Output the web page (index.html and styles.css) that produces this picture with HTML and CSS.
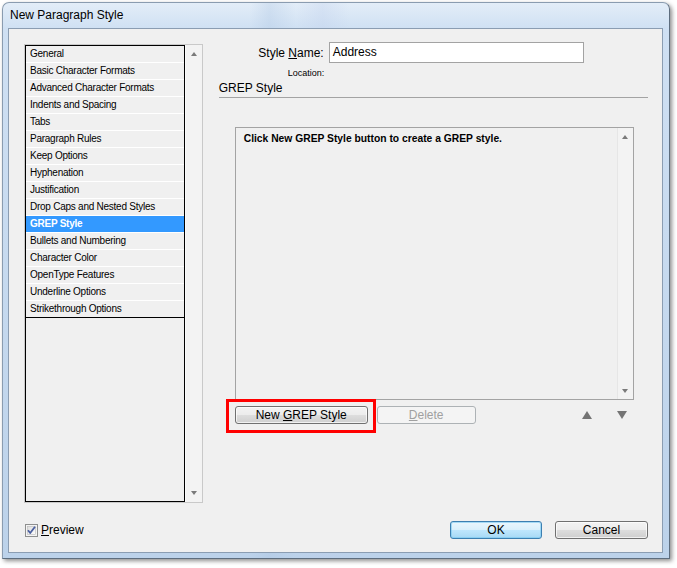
FILE: index.html
```html
<!DOCTYPE html>
<html>
<head>
<meta charset="utf-8">
<title>New Paragraph Style</title>
<link rel="stylesheet" href="styles.css">
</head>
<body>
<div class="screen">
  <div class="window">
    <div class="titlebar">New Paragraph Style</div>
    <div class="client">
      <div class="main">
        <div class="listbox">
          <div class="list">
            <div class="item">General</div>
            <div class="item">Basic Character Formats</div>
            <div class="item">Advanced Character Formats</div>
            <div class="item">Indents and Spacing</div>
            <div class="item">Tabs</div>
            <div class="item">Paragraph Rules</div>
            <div class="item">Keep Options</div>
            <div class="item">Hyphenation</div>
            <div class="item">Justification</div>
            <div class="item">Drop Caps and Nested Styles</div>
            <div class="item selected">GREP Style</div>
            <div class="item">Bullets and Numbering</div>
            <div class="item">Character Color</div>
            <div class="item">OpenType Features</div>
            <div class="item">Underline Options</div>
            <div class="item last">Strikethrough Options</div>
          </div>
          <div class="vscroll">
            <span class="sarrow up"></span>
            <span class="sarrow down"></span>
          </div>
        </div>
        <div class="panel">
          <div class="name-row">
            <label class="name-label">Style <u>N</u>ame:</label>
            <div class="textbox">Address</div>
          </div>
          <div class="location">Location:</div>
          <div class="heading">GREP Style</div>
          <div class="grepbox">
            <div class="grep-content">Click New GREP Style button to create a GREP style.</div>
            <div class="vscroll small">
              <span class="sarrow up"></span>
              <span class="sarrow down"></span>
            </div>
          </div>
          <div class="btn-row">
            <span class="highlight"><button class="btn new-btn">New <u>G</u>REP Style</button></span>
            <button class="btn disabled delete-btn"><u>D</u>elete</button>
            <span class="tri tri-up"></span>
            <span class="tri tri-down"></span>
          </div>
        </div>
      </div>
      <div class="bottom-row">
        <span class="checkbox">
          <svg width="13" height="13" viewBox="0 0 13 13">
            <defs>
              <linearGradient id="cbg" x1="0" y1="0" x2="1" y2="1">
                <stop offset="0" stop-color="#dcdcdc"/>
                <stop offset="1" stop-color="#ffffff"/>
              </linearGradient>
            </defs>
            <rect x="0.5" y="0.5" width="12" height="12" fill="#f4f4f4" stroke="#8e8f8f"/>
            <rect x="2.5" y="2.5" width="8" height="8" fill="url(#cbg)" stroke="#b9b9b9" stroke-width="0.6"/>
            <path d="M3 6.2 L5.2 9 L10 2.8" fill="none" stroke="#4a5fa0" stroke-width="1.8" stroke-linejoin="round"/>
          </svg>
        </span>
        <span class="check-label"><u>P</u>review</span>
        <div class="dlg-buttons">
          <button class="btn default ok-btn">OK</button>
          <button class="btn cancel-btn">Cancel</button>
        </div>
      </div>
    </div>
  </div>
</div>
</body>
</html>
```
FILE: styles.css
```css
* { box-sizing: border-box; }
html, body { margin: 0; padding: 0; }
body { background: #ffffff; font-family: "Liberation Sans", Arial, sans-serif; }

.screen {
  width: 677px;
  height: 568px;
  overflow: hidden;
  padding: 2px 0 0 2px;
}

.window {
  width: 668px;
  height: 557px;
  border: 1px solid #8a9cb0;
  border-right-color: #5d6d7e;
  border-bottom-color: #5d6d7e;
  border-radius: 7px 7px 0 0;
  background:
    linear-gradient(to right, rgba(255,255,255,0) 0, rgba(255,255,255,0) 37%, rgba(170,195,225,0.3) 40%, rgba(255,255,255,0) 44%, rgba(190,205,235,0.3) 48%, rgba(255,255,255,0) 52%, rgba(255,255,255,0) 100%),
    linear-gradient(to bottom, #e3edf8 0, #cfe0f3 26px, #c4d8ee 60%, #bcd2ea 100%);
  padding: 0 6px 5px 5px;
  display: flex;
  flex-direction: column;
  box-shadow: 2px 2px 4px rgba(0,0,0,0.45);
}

.titlebar {
  height: 25px;
  line-height: 25px;
  padding-left: 2px;
  font-size: 12px;
  color: #000;
}

.client {
  flex: 1;
  border: 1px solid #8b9db2;
  background: #f0f0f0;
  padding: 15px 14px 0 15px;
  display: flex;
  flex-direction: column;
}

.main {
  display: flex;
  height: 459px;
}

/* left list */
.listbox {
  width: 179px;
  height: 459px;
  border: 1px solid #c9c9c9;
  display: flex;
  background: #f0f0f0;
}
.list {
  width: 160px;
  border: 1px solid #000;
  background: #f0f0f0;
}
.item {
  height: 17px;
  line-height: 16px;
  padding-left: 4px;
  font-size: 10px;
  letter-spacing: -0.25px;
  color: #000;
  border-bottom: 1px solid #ffffff;
  white-space: nowrap;
}
.item.selected {
  background: #3399ff;
  color: #fff;
  font-weight: bold;
}
.item.last { border-bottom-color: #000; }

.vscroll {
  flex: 1;
  position: relative;
  background: #f3f3f3;
  border-left: 1px solid #fbfbfb;
}
.sarrow {
  position: absolute;
  left: 50%;
  margin-left: -3px;
  width: 0;
  height: 0;
  border-left: 3.5px solid transparent;
  border-right: 3.5px solid transparent;
}
.sarrow.up { top: 7px; border-bottom: 4px solid #7a7a7a; }
.sarrow.down { bottom: 7px; border-top: 4px solid #7a7a7a; }

/* right panel */
.panel {
  margin-left: 16px;
  width: 430px;
  display: flex;
  flex-direction: column;
}
.name-row {
  display: flex;
  height: 21px;
  margin-top: -2px;
  align-items: center;
}
.name-label {
  width: 110px;
  padding-right: 5px;
  text-align: right;
  font-size: 12px;
  color: #000;
}
.textbox {
  width: 255px;
  height: 21px;
  border: 1px solid #a3a3a3;
  background: #fff;
  font-size: 12px;
  line-height: 19px;
  padding-left: 3px;
  color: #000;
}
.location {
  margin-top: 4px;
  margin-left: 69px;
  height: 12px;
  line-height: 12px;
  font-size: 9px;
  color: #000;
}
.heading {
  height: 19px;
  padding-top: 1px;
  line-height: 16px;
  font-size: 12px;
  color: #000;
  border-bottom: 1px solid #a3a3a3;
}
.grepbox {
  margin-top: 29px;
  margin-left: 16px;
  width: 399px;
  height: 273px;
  border: 1px solid #a3a3a3;
  display: flex;
}
.grep-content {
  width: 381px;
  padding: 5px 0 0 8px;
  font-size: 10.3px;
  line-height: 12px;
  font-weight: bold;
  color: #000;
  white-space: nowrap;
}
.vscroll.small { border-left: 1px solid #e6e6e6; }
.vscroll.small .sarrow.up { top: 7px; }
.vscroll.small .sarrow.down { bottom: 6px; }

.btn-row {
  margin-top: 6px;
  margin-left: 16px;
  height: 18px;
  display: flex;
  align-items: center;
}
.btn {
  height: 18px;
  padding: 0;
  font-family: "Liberation Sans", Arial, sans-serif;
  font-size: 12px;
  color: #000;
  border: 1px solid #707070;
  border-radius: 3px;
  background: linear-gradient(to bottom, #f3f3f3 0, #ececec 48%, #dddddd 52%, #cfcfcf 100%);
  box-shadow: inset 0 0 0 1px rgba(255,255,255,0.7);
  line-height: 15px;
}
.highlight {
  position: relative;
  display: inline-flex;
}
.highlight::after {
  content: "";
  position: absolute;
  top: -7px;
  left: -9px;
  right: -8px;
  bottom: -9px;
  border: 3px solid #ff0000;
  pointer-events: none;
}
.new-btn { width: 133px; }
.delete-btn { width: 99px; margin-left: 9px; }
.btn.disabled {
  color: #a0a0a0;
  border-color: #adb2b5;
  background: #f4f4f4;
  box-shadow: none;
}
.tri {
  width: 0;
  height: 0;
  border-left: 5px solid transparent;
  border-right: 5px solid transparent;
}
.tri-up { margin-left: 106px; border-bottom: 8px solid #747474; }
.tri-down { margin-left: 25px; border-top: 8px solid #747474; }

/* bottom */
.bottom-row {
  margin-top: 18px;
  height: 18px;
  display: flex;
  align-items: center;
  padding-left: 1px;
}
.checkbox { width: 13px; height: 13px; display: inline-flex; }
.check-label {
  margin-left: 3px;
  font-size: 12px;
  color: #000;
}
.dlg-buttons {
  margin-left: auto;
  display: flex;
  gap: 13px;
}
.ok-btn { width: 92px; }
.cancel-btn { width: 93px; }
.btn.default {
  border-color: #3c7fb1;
  background: linear-gradient(to bottom, #eaf6fd 0, #d9f0fc 48%, #bee6fd 52%, #a7d9f5 100%);
  box-shadow: inset 0 0 0 1px rgba(120,200,240,0.6);
}
```
